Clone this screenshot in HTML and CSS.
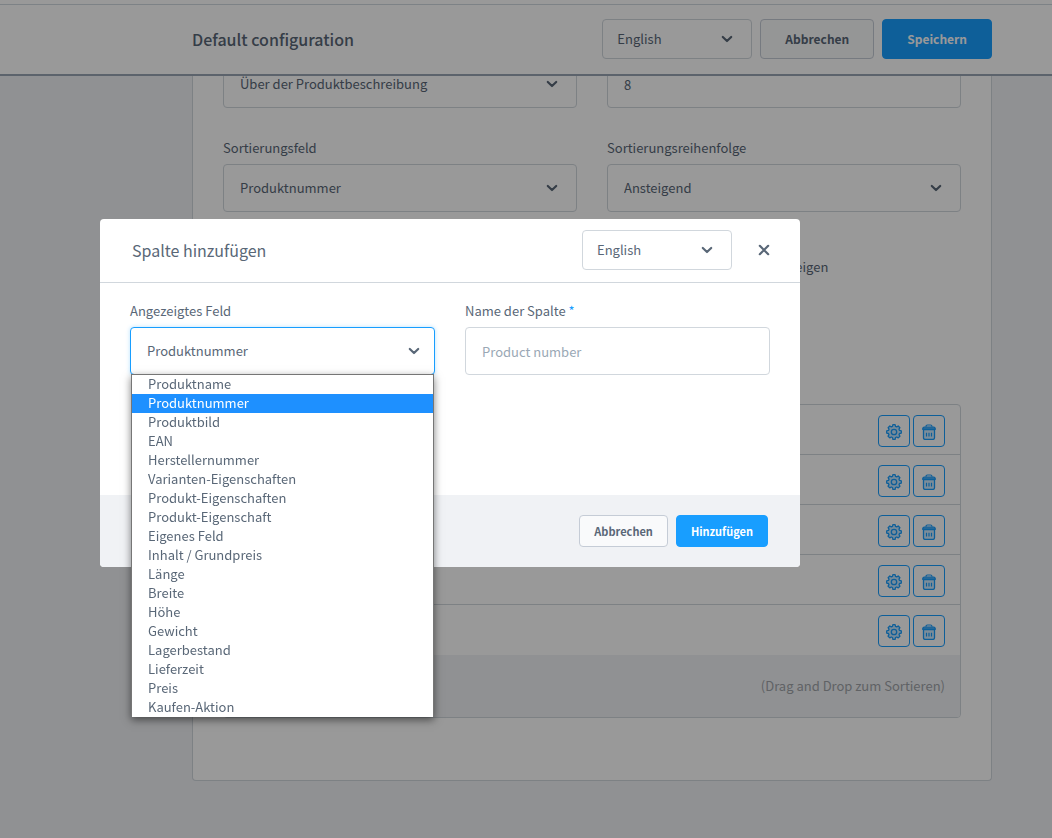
FILE: index.html
```
<!DOCTYPE html>
<html lang="de">
<head>
<meta charset="utf-8">
<meta name="viewport" content="width=device-width, initial-scale=1">
<title>Default configuration</title>
<link rel="stylesheet" href="styles.css">
</head>
<body>
<svg class="sprite" aria-hidden="true">
  <symbol id="chevron" viewBox="0 0 12 8"><path d="M1.800 2 6 6l4.200-4" fill="none" stroke="currentColor" stroke-width="2.200" stroke-linecap="round" stroke-linejoin="round"/></symbol>
  <symbol id="gear" viewBox="0 0 16 16"><path d="M6.900.7h2.200l.4 1.700 1.200.5 1.500-.9 1.700 1.700-.9 1.500.5 1.200 1.800.4v2.300l-1.800.4-.5 1.200.9 1.500-1.700 1.700-1.500-.9-1.200.5-.4 1.800H6.900l-.4-1.800-1.200-.5-1.500.9-1.700-1.700.9-1.500-.5-1.200-1.800-.4V6.800l1.800-.4.5-1.200-.9-1.500 1.700-1.700 1.500.9 1.200-.5z" fill="currentColor" fill-opacity=".25" stroke="currentColor" stroke-linejoin="round" stroke-width="1.300"/><circle cx="8" cy="8" r="2.700" fill="none" stroke="currentColor" stroke-width="1.300"/></symbol>
  <symbol id="trash" viewBox="0 0 16 16"><path d="M2.500 5.500h11v8.300c0 1-.6 1.600-1.600 1.600H4.100c-1 0-1.600-.6-1.600-1.600z" fill="currentColor" fill-opacity=".2" stroke="currentColor" stroke-width="1.300"/><path d="M1.700 5.300c0-1.500.5-2.300 1.800-2.300h9c1.300 0 1.800.8 1.800 2.300z" fill="currentColor" fill-opacity=".7" stroke="currentColor" stroke-width="1.200" stroke-linejoin="round"/><path d="M5 2.800C5 1.500 5.500 1 6.500 1h3c1 0 1.500.5 1.500 1.800M5.500 8.700v3.800M8 8.700v3.800M10.500 8.700v3.800" fill="none" stroke="currentColor" stroke-width="1.200"/></symbol>
  <symbol id="close" viewBox="0 0 12 12"><path d="m1.800 1.800 8.400 8.400m0-8.400-8.400 8.400" stroke="currentColor" stroke-width="2.200" stroke-linecap="round"/></symbol>
</svg>

<header class="topbar">
  <h1 class="topbar-title">Default configuration</h1>
  <div class="select select-small">
    <select aria-label="Sprache"><option>English</option></select>
    <svg class="chevron"><use href="#chevron"/></svg>
  </div>
  <button class="button" type="button">Abbrechen</button>
  <button class="button button-primary" type="button">Speichern</button>
</header>

<main class="page">
  <section class="card">
    <div class="fields">
      <div class="select">
        <select aria-label="Position"><option>Über der Produktbeschreibung</option></select>
        <svg class="chevron"><use href="#chevron"/></svg>
      </div>
      <input class="input" type="text" value="8" aria-label="Anzahl">
      <div class="field">
        <label for="sort-field">Sortierungsfeld</label>
        <div class="select">
          <select id="sort-field"><option>Produktnummer</option></select>
          <svg class="chevron"><use href="#chevron"/></svg>
        </div>
      </div>
      <div class="field">
        <label for="sort-order">Sortierungsreihenfolge</label>
        <div class="select">
          <select id="sort-order"><option>Ansteigend</option></select>
          <svg class="chevron"><use href="#chevron"/></svg>
        </div>
      </div>
    </div>
    <p class="hint">anzeigen</p>
    <div class="columns">
      <div class="column-row"><button class="icon-button" type="button" aria-label="Einstellungen"><svg><use href="#gear"/></svg></button><button class="icon-button" type="button" aria-label="Löschen"><svg><use href="#trash"/></svg></button></div>
      <div class="column-row"><button class="icon-button" type="button" aria-label="Einstellungen"><svg><use href="#gear"/></svg></button><button class="icon-button" type="button" aria-label="Löschen"><svg><use href="#trash"/></svg></button></div>
      <div class="column-row"><button class="icon-button" type="button" aria-label="Einstellungen"><svg><use href="#gear"/></svg></button><button class="icon-button" type="button" aria-label="Löschen"><svg><use href="#trash"/></svg></button></div>
      <div class="column-row"><button class="icon-button" type="button" aria-label="Einstellungen"><svg><use href="#gear"/></svg></button><button class="icon-button" type="button" aria-label="Löschen"><svg><use href="#trash"/></svg></button></div>
      <div class="column-row"><button class="icon-button" type="button" aria-label="Einstellungen"><svg><use href="#gear"/></svg></button><button class="icon-button" type="button" aria-label="Löschen"><svg><use href="#trash"/></svg></button></div>
      <div class="columns-footer">(Drag and Drop zum Sortieren)</div>
    </div>
  </section>
</main>

<div class="overlay">
  <div class="modal" role="dialog" aria-labelledby="modal-title">
    <div class="modal-header">
      <h2 class="modal-title" id="modal-title">Spalte hinzufügen</h2>
      <div class="select select-small">
        <select aria-label="Sprache"><option>English</option></select>
        <svg class="chevron"><use href="#chevron"/></svg>
      </div>
      <button class="close" type="button" aria-label="Schließen"><svg><use href="#close"/></svg></button>
    </div>
    <div class="modal-body">
      <div class="field">
        <label for="shown-field">Angezeigtes Feld</label>
        <div class="select select-open">
          <select id="shown-field"><option>Produktnummer</option></select>
          <svg class="chevron"><use href="#chevron"/></svg>
          <ul class="options" role="listbox">
            <li role="option">Produktname</li>
            <li role="option" class="active" aria-selected="true">Produktnummer</li>
            <li role="option">Produktbild</li>
            <li role="option">EAN</li>
            <li role="option">Herstellernummer</li>
            <li role="option">Varianten-Eigenschaften</li>
            <li role="option">Produkt-Eigenschaften</li>
            <li role="option">Produkt-Eigenschaft</li>
            <li role="option">Eigenes Feld</li>
            <li role="option">Inhalt / Grundpreis</li>
            <li role="option">Länge</li>
            <li role="option">Breite</li>
            <li role="option">Höhe</li>
            <li role="option">Gewicht</li>
            <li role="option">Lagerbestand</li>
            <li role="option">Lieferzeit</li>
            <li role="option">Preis</li>
            <li role="option">Kaufen-Aktion</li>
          </ul>
        </div>
      </div>
      <div class="field">
        <label for="column-name">Name der Spalte <span class="required">*</span></label>
        <input class="input" id="column-name" type="text" placeholder="Product number">
      </div>
    </div>
    <div class="modal-footer">
      <button class="button button-small" type="button">Abbrechen</button>
      <button class="button button-small button-primary" type="button">Hinzufügen</button>
    </div>
  </div>
</div>
</body>
</html>
```
FILE: styles.css
```
* { box-sizing: border-box; }

body {
  margin: 0;
  min-height: 100vh;
  background: #f0f2f5;
  color: #596777;
  font: 13px/20px "Noto Sans CJK SC", "Open Sans", sans-serif;
}

h1, h2, p, ul { margin: 0; padding: 0; }
button, input, select { font: inherit; color: inherit; }
.sprite { display: none; }

.topbar {
  position: relative;
  z-index: 1;
  display: flex;
  align-items: center;
  gap: 8px;
  height: 76px;
  padding: 4px 60px 0 192px;
  background: linear-gradient(#d1d9e0, #d1d9e0) 0 4px / 100% 1px no-repeat #fff;
  border-bottom: 2px solid #99a6b5;
}

.topbar-title {
  flex: 1;
  font-size: 16px;
  line-height: 24px;
  font-weight: 500;
}

.page { padding: 0 60px 56px 192px; margin-top: -16px; }

.card {
  padding: 0 30px 62px;
  background: #fff;
  border: 1px solid #d1d7dd;
  border-top: 0;
  border-radius: 0 0 4px 4px;
}

.fields {
  display: grid;
  grid-template-columns: 1fr 1fr;
  gap: 30px;
}

.field { min-width: 0; }
.field label { display: block; margin-bottom: 6px; }
.required { color: #189eff; }

.input, .select select {
  display: block;
  width: 100%;
  height: 48px;
  padding: 0 16px;
  background: #fff;
  border: 1px solid #d1d7dd;
  border-radius: 4px;
  outline: 0;
  appearance: none;
}

.input::placeholder { color: #9aa8b5; opacity: 1; }

.select { position: relative; }

.chevron {
  position: absolute;
  top: 50%;
  right: 19px;
  width: 12px;
  height: 8px;
  margin-top: -4px;
  pointer-events: none;
}

.select-small { width: 150px; }
.select-small select { height: 40px; padding: 0 14px; }

.button {
  height: 40px;
  padding: 0 24px;
  background: #f9fafb;
  border: 1px solid #c5ccd6;
  border-radius: 4px;
  font-size: 12px;
  font-weight: 700;
}

.button-primary { background: #189eff; border-color: #189eff; color: #fff; }

.button-small {
  height: 32px;
  padding: 0 14px;
  font-size: 11px;
}

.hint { margin-top: 45px; padding-left: 551px; }

.columns {
  margin-top: 127px;
  border: 1px solid #d1d7dd;
  border-radius: 4px;
  overflow: hidden;
}

.column-row {
  display: flex;
  justify-content: flex-end;
  align-items: center;
  gap: 3px;
  height: 50px;
  padding: 2px 15px 0;
  border-bottom: 1px solid #d1d7dd;
}

.column-row:nth-child(5) { border-bottom-color: #fff; }

.icon-button {
  display: grid;
  place-items: center;
  width: 32px;
  height: 32px;
  padding: 2px 0 0;
  background: none;
  border: 1px solid #189eff;
  border-radius: 4px;
  color: #189eff;
}

.icon-button svg { width: 16px; height: 16px; }

.columns-footer {
  padding: 21px 15px;
  background: #f0f2f5;
  color: #a0a4a9;
  text-align: right;
}

.overlay {
  position: fixed;
  inset: 0;
  z-index: 2;
  padding: 219px 252px 0 100px;
  background: rgba(0, 0, 0, .4);
}

.modal { background: #fff; border-radius: 4px; }

.modal-header {
  display: flex;
  align-items: center;
  height: 64px;
  padding: 0 20px 2px 32px;
  border-bottom: 1px solid #d1d7dd;
}

.modal-title {
  flex: 1;
  font-size: 16px;
  line-height: 24px;
  font-weight: 400;
}

.close {
  display: grid;
  place-items: center;
  width: 32px;
  height: 32px;
  margin-left: 16px;
  padding: 0;
  background: none;
  border: 0;
}

.close svg { width: 12px; height: 12px; }

.modal-body {
  display: grid;
  grid-template-columns: 1fr 1fr;
  gap: 30px;
  min-height: 212px;
  padding: 18px 30px;
}

.select-open select {
  border-color: #189eff;
  box-shadow: 0 0 4px rgba(24, 158, 255, .3);
}

.select-open .chevron { right: 15px; }

.options {
  position: absolute;
  z-index: 3;
  top: 47px;
  left: 1px;
  right: 1px;
  background: #fff;
  border: 1px solid #767676;
  border-bottom: 0;
  box-shadow: 0 3px 8px rgba(0, 0, 0, .5);
  list-style: none;
}

.options li { padding: 0 16px 2px; line-height: 17px; }
.options .active { background: #1e90ff; color: #fff; }

.modal-footer {
  display: flex;
  justify-content: flex-end;
  gap: 8px;
  padding: 20px 32px;
  background: #f0f2f5;
  border-radius: 0 0 4px 4px;
}
```
